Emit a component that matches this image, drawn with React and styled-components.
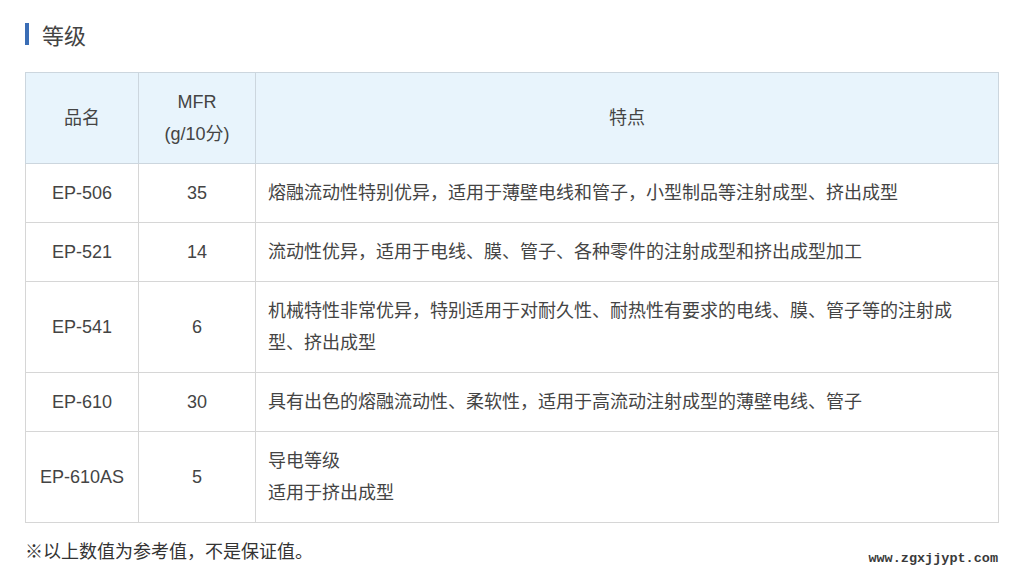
import styled, { createGlobalStyle } from "styled-components";

const GlobalStyle = createGlobalStyle`
  html, body {
    margin: 0;
    padding: 0;
    background: #fff;
  }
  body {
    font-family: "Liberation Sans", "Noto Sans CJK SC", sans-serif;
    color: #444;
  }
`;

const Page = styled.div`
  width: 1024px;
  height: 580px;
  padding: 21px 26px 0 25px;
  box-sizing: border-box;
  position: relative;
  overflow: hidden;
`;

const Heading = styled.h2`
  display: flex;
  align-items: center;
  gap: 13px;
  margin: 0 0 25px;
  height: 26px;
  font-size: 22px;
  font-weight: normal;
  color: #444;
  &::before {
    content: "";
    width: 4px;
    height: 22px;
    background: #3a6db5;
  }
`;

const Table = styled.table`
  width: 974px;
  border-collapse: collapse;
  font-size: 18px;
  color: #444;
`;

const Th = styled.th`
  width: ${(p) => p.w || "auto"};
  background: #e8f4fc;
  border: 1px solid #ccd6de;
  font-weight: normal;
  line-height: 32px;
  padding: 13px 0;
  text-align: center;
`;

const Td = styled.td`
  border: 1px solid #d6d6d6;
  line-height: 32px;
  padding: 13px ${(p) => (p.left ? "12px" : "0")};
  text-align: ${(p) => (p.left ? "left" : "center")};
  vertical-align: middle;
`;

const Note = styled.p`
  margin: 14px 0 0;
  font-size: 18px;
  color: #333;
`;

const Watermark = styled.span`
  position: absolute;
  right: 26px;
  bottom: 14px;
  font-family: "Liberation Mono", monospace;
  font-size: 13.5px;
  font-weight: bold;
  color: #3a3a3a;
`;

const rows = [
  ["EP-506", "35", ["熔融流动性特别优异，适用于薄壁电线和管子，小型制品等注射成型、挤出成型"]],
  ["EP-521", "14", ["流动性优异，适用于电线、膜、管子、各种零件的注射成型和挤出成型加工"]],
  ["EP-541", "6", ["机械特性非常优异，特别适用于对耐久性、耐热性有要求的电线、膜、管子等的注射成", "型、挤出成型"]],
  ["EP-610", "30", ["具有出色的熔融流动性、柔软性，适用于高流动注射成型的薄壁电线、管子"]],
  ["EP-610AS", "5", ["导电等级", "适用于挤出成型"]],
];

export default function App() {
  return (
    <Page>
      <GlobalStyle />
      <Heading>等级</Heading>
      <Table>
        <thead>
          <tr>
            <Th w="112px">品名</Th>
            <Th w="116px">
              MFR
              <br />
              (g/10分)
            </Th>
            <Th>特点</Th>
          </tr>
        </thead>
        <tbody>
          {rows.map(([name, mfr, lines]) => (
            <tr key={name}>
              <Td>{name}</Td>
              <Td>{mfr}</Td>
              <Td left>
                {lines.map((l, i) => (
                  <div key={i}>{l}</div>
                ))}
              </Td>
            </tr>
          ))}
        </tbody>
      </Table>
      <Note>※以上数值为参考值，不是保证值。</Note>
      <Watermark>www.zgxjjypt.com</Watermark>
    </Page>
  );
}
